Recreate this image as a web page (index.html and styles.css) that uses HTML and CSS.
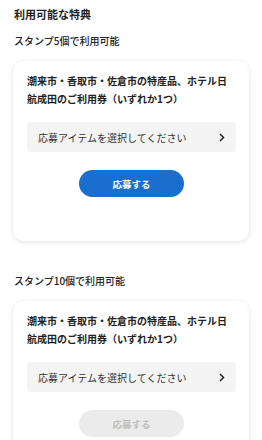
FILE: index.html
```html
<!DOCTYPE html>
<html lang="ja">
<head>
<meta charset="utf-8">
<link rel="stylesheet" href="styles.css">
</head>
<body>
<div class="page">
  <h1 class="page-title">利用可能な特典</h1>

  <section class="group">
    <h2 class="group-title">スタンプ5個で利用可能</h2>
    <div class="card">
      <p class="card-title">潮来市・香取市・佐倉市の特産品、ホテル日航成田のご利用券（いずれか1つ）</p>
      <div class="select">
        <span>応募アイテムを選択してください</span>
        <svg class="chev" width="6" height="9" viewBox="0 0 6 9"><path d="M1 1 L4.5 4.5 L1 8" fill="none" stroke="#222" stroke-width="1.5"/></svg>
      </div>
      <div class="actions"><button class="btn btn-primary">応募する</button></div>
    </div>
  </section>

  <section class="group group-2">
    <h2 class="group-title">スタンプ10個で利用可能</h2>
    <div class="card">
      <p class="card-title">潮来市・香取市・佐倉市の特産品、ホテル日航成田のご利用券（いずれか1つ）</p>
      <div class="select">
        <span>応募アイテムを選択してください</span>
        <svg class="chev" width="6" height="9" viewBox="0 0 6 9"><path d="M1 1 L4.5 4.5 L1 8" fill="none" stroke="#222" stroke-width="1.5"/></svg>
      </div>
      <div class="actions"><button class="btn btn-disabled">応募する</button></div>
    </div>
  </section>
</div>
</body>
</html>
```

FILE: styles.css
```css
* { box-sizing: border-box; }
html, body { margin: 0; padding: 0; background: #fff; }
body {
  font-family: "Noto Sans CJK JP", "Noto Sans", sans-serif;
  color: #222;
}
.page {
  padding: 6px 13px 0 13px;
}
.page-title {
  margin: 0 0 0 1px;
  font-size: 11px;
  line-height: 16px;
  font-weight: 700;
}
.group { margin-top: 12px; }
.group-2 { margin-top: 33px; }
.group-title {
  margin: 0 0 13px 1px;
  font-size: 10px;
  line-height: 14px;
  font-weight: 500;
}
.card {
  background: #fff;
  border-radius: 10px;
  box-shadow: 0 1px 5px rgba(0,0,0,0.12);
  padding: 11px 13px 44px 14px;
}
.card-title {
  margin: 0;
  font-size: 10px;
  line-height: 18px;
  font-weight: 700;
}
.select {
  margin-top: 14px;
  height: 30px;
  background: #f4f4f4;
  border-radius: 3px;
  display: flex;
  align-items: center;
  justify-content: space-between;
  padding: 0 11px 0 11px;
  font-size: 10px;
  color: #333;
}
.chev { display: block; }
.actions {
  margin-top: 18px;
  display: flex;
  justify-content: center;
}
.btn {
  width: 105px;
  height: 27px;
  border: none;
  border-radius: 14px;
  font-family: inherit;
  font-size: 9.5px;
  font-weight: 700;
  padding: 0;
}
.btn-primary { background: #1a6fce; color: #fff; }
.btn-disabled { background: #ebebeb; color: #bfbfbf; }
```
